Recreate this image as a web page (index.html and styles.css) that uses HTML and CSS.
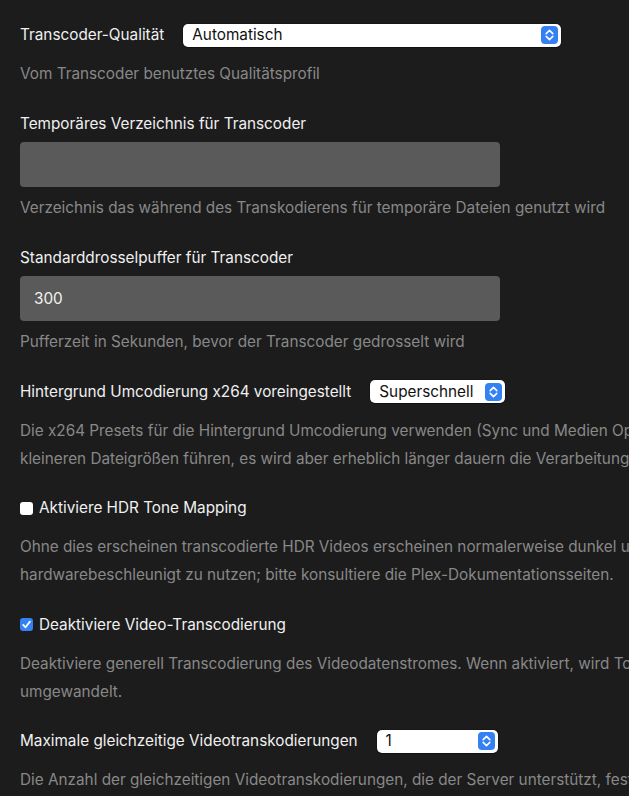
FILE: index.html
```html
<!DOCTYPE html>
<html lang="de">
<head>
<meta charset="utf-8">
<title>Transcoder</title>
<link rel="stylesheet" href="styles.css">
</head>
<body>
<main class="settings">
  <section class="setting">
    <div class="row">
      <span class="label">Transcoder-Qualität</span>
      <div class="select select-wide">
        <span class="select-value">Automatisch</span>
        <span class="stepper"><svg viewBox="0 0 17 18" width="17" height="18"><path d="M5.2 7.6 L8.5 4.4 L11.8 7.6 M5.2 10.4 L8.5 13.6 L11.8 10.4" fill="none" stroke="#fff" stroke-width="1.6" stroke-linecap="round" stroke-linejoin="round"/></svg></span>
      </div>
    </div>
    <p class="desc">Vom Transcoder benutztes Qualitätsprofil</p>
  </section>

  <section class="setting setting-input">
    <div class="label block">Temporäres Verzeichnis für Transcoder</div>
    <div class="input"></div>
    <p class="desc desc-after-input">Verzeichnis das während des Transkodierens für temporäre Dateien genutzt wird</p>
  </section>

  <section class="setting setting-input">
    <div class="label block">Standarddrosselpuffer für Transcoder</div>
    <div class="input"><span class="input-value">300</span></div>
    <p class="desc desc-after-input">Pufferzeit in Sekunden, bevor der Transcoder gedrosselt wird</p>
  </section>

  <section class="setting">
    <div class="row">
      <span class="label">Hintergrund Umcodierung x264 voreingestellt</span>
      <div class="select select-preset">
        <span class="select-value">Superschnell</span>
        <span class="stepper"><svg viewBox="0 0 17 18" width="17" height="18"><path d="M5.2 7.6 L8.5 4.4 L11.8 7.6 M5.2 10.4 L8.5 13.6 L11.8 10.4" fill="none" stroke="#fff" stroke-width="1.6" stroke-linecap="round" stroke-linejoin="round"/></svg></span>
      </div>
    </div>
    <p class="desc">Die x264 Presets für die Hintergrund Umcodierung verwenden (Sync und Medien Optimierer). Langsamere Presets werden zu besserer Qualität und<br>kleineren Dateigrößen führen, es wird aber erheblich länger dauern die Verarbeitung abzuschließen.</p>
  </section>

  <section class="setting">
    <label class="check-row">
      <span class="checkbox"></span>
      <span class="label">Aktiviere HDR Tone Mapping</span>
    </label>
    <p class="desc">Ohne dies erscheinen transcodierte HDR Videos erscheinen normalerweise dunkel und verwaschen. Eine kompatible GPU wird benötigt, um dies<br>hardwarebeschleunigt zu nutzen; bitte konsultiere die Plex-Dokumentationsseiten.</p>
  </section>

  <section class="setting">
    <label class="check-row">
      <span class="checkbox checked"><svg viewBox="0 0 13 13" width="13" height="13"><path d="M3.2 6.9 L5.5 9.3 L9.9 3.6" fill="none" stroke="#fff" stroke-width="1.8" stroke-linecap="round" stroke-linejoin="round"/></svg></span>
      <span class="label">Deaktiviere Video-Transcodierung</span>
    </label>
    <p class="desc">Deaktiviere generell Transcodierung des Videodatenstromes. Wenn aktiviert, wird Ton weiterhin bei Bedarf in ein kompatibles Format<br>umgewandelt.</p>
  </section>

  <section class="setting">
    <div class="row">
      <span class="label">Maximale gleichzeitige Videotranskodierungen</span>
      <div class="select select-count">
        <span class="select-value">1</span>
        <span class="stepper"><svg viewBox="0 0 17 18" width="17" height="18"><path d="M5.2 7.6 L8.5 4.4 L11.8 7.6 M5.2 10.4 L8.5 13.6 L11.8 10.4" fill="none" stroke="#fff" stroke-width="1.6" stroke-linecap="round" stroke-linejoin="round"/></svg></span>
      </div>
    </div>
    <p class="desc">Die Anzahl der gleichzeitigen Videotranskodierungen, die der Server unterstützt, festlegen.</p>
  </section>
</main>
</body>
</html>
```

FILE: styles.css
```css
html, body {
  margin: 0;
  padding: 0;
  background: #1c1c1c;
  overflow: hidden;
}

body {
  font-family: Inter, "Noto Sans", "Liberation Sans", sans-serif;
  font-size: 15.3px;
  color: #efefef;
}

.settings {
  padding: 21px 0 0 20px;
  display: flex;
  flex-direction: column;
  gap: 21.5px;
}

.setting {
  display: flex;
  flex-direction: column;
}

.setting-input {
  padding-bottom: 0.5px;
}

.row {
  display: flex;
  align-items: center;
  height: 28px;
}

.label {
  line-height: 28px;
  white-space: nowrap;
  color: #f0f0f0;
}

.row .label {
  margin-right: 19px;
}

.label.block {
  display: block;
}

.desc {
  margin: 11px 0 0;
  line-height: 28px;
  color: #888888;
  white-space: nowrap;
}

.desc-after-input {
  margin-top: 7px;
}

.input {
  margin-top: 4px;
  width: 480px;
  height: 45px;
  background: #5a5a5a;
  border-radius: 4px;
  display: flex;
  align-items: center;
  box-sizing: border-box;
  padding-left: 14px;
}

.input-value {
  color: #f2f2f2;
}

.select {
  height: 23px;
  background: #ffffff;
  border-radius: 5px;
  box-shadow: 0 0 0 0.5px rgba(0, 0, 0, 0.4), 0 1px 1px rgba(0, 0, 0, 0.3);
  display: flex;
  align-items: center;
  justify-content: space-between;
  box-sizing: border-box;
  padding: 0 3px 0 9px;
  color: #111;
}

.select-wide {
  width: 378px;
}

.select-preset {
  width: 135px;
}

.select-count {
  width: 121px;
}

.select-value {
  line-height: 22px;
}

.stepper {
  width: 17px;
  height: 18px;
  background: #3381f3;
  border-radius: 4px;
  display: flex;
}

.check-row {
  display: flex;
  align-items: center;
  height: 28px;
  gap: 6px;
}

.checkbox {
  width: 13px;
  height: 13px;
  background: #ffffff;
  border-radius: 3px;
  display: flex;
  flex: none;
}

.checkbox.checked {
  background: #3381f3;
}
```
